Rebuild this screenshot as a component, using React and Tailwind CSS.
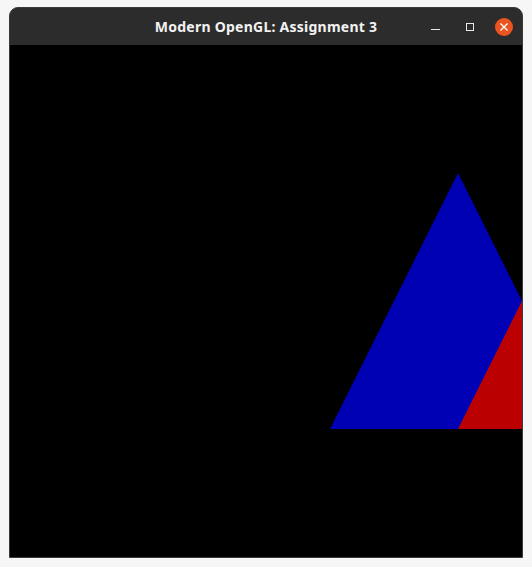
export default function App() {
  return (
    <div className="w-[532px] h-[567px] bg-[#f6f6f6] pt-[7px] pl-[9px] overflow-hidden">
      <div className="w-[514px] rounded-t-[9px] bg-[#2c2c2c] border border-[#3a3a3a] overflow-hidden">
        <div className="relative h-[37px] flex items-center justify-center">
          <span
            className="text-[14px] font-bold text-[#f2f2f2] leading-none tracking-[0.25px]"
            style={{ fontFamily: '"Noto Sans", "Open Sans", sans-serif' }}
          >
            Modern OpenGL: Assignment 3
          </span>
          <div className="absolute right-0 top-0 h-[37px] flex items-center">
            <div className="w-[9px] h-[1px] bg-[#e8e8e8] mt-[6px] mr-[26px]"></div>
            <div className="w-[8px] h-[8px] border border-[#e8e8e8] mr-[21px]"></div>
            <div className="w-[18px] h-[18px] rounded-full bg-[#e95420] flex items-center justify-center mr-[9px]">
              <svg width="8" height="8" viewBox="0 0 8 8">
                <path d="M0.5 0.5 L7.5 7.5 M7.5 0.5 L0.5 7.5" stroke="#ffffff" strokeWidth="1.3" />
              </svg>
            </div>
          </div>
        </div>
        <div className="w-[512px] h-[512px] bg-black">
          <svg width="512" height="512" viewBox="0 0 512 512">
            <polygon points="320,384 448,128 576,384" fill="#0000b4" />
            <polygon points="448,384 576,128 704,384" fill="#ba0000" />
          </svg>
        </div>
      </div>
    </div>
  );
}
